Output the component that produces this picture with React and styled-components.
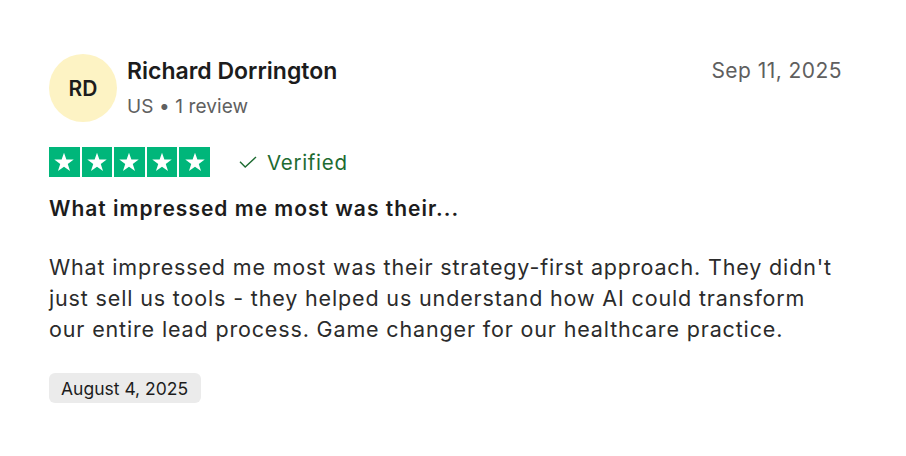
import React from 'react'
import styled, { createGlobalStyle } from 'styled-components'

const GlobalStyle = createGlobalStyle`
  body {
    margin: 0;
    background: #ffffff;
    font-family: Inter, "Noto Sans", sans-serif;
    color: #1c1c1c;
  }
`

const Card = styled.article`
  width: 906px;
  height: 456px;
  box-sizing: border-box;
  padding: 54px 64px 0 49px;
  display: flex;
  flex-direction: column;
`

const Header = styled.header`
  display: flex;
  align-items: flex-start;
`

const Avatar = styled.div`
  width: 68px;
  height: 68px;
  border-radius: 50%;
  background: #fdf3c4;
  display: flex;
  align-items: center;
  justify-content: center;
  font-size: 21px;
  font-weight: 600;
  color: #1c1c1c;
  flex-shrink: 0;
`

const Who = styled.div`
  margin-left: 10px;
  flex: 1;
  display: flex;
  flex-direction: column;
  padding-top: 3px;
`

const Name = styled.div`
  font-size: 23px;
  font-weight: 600;
  line-height: 28px;
  color: #1c1c1c;
`

const Meta = styled.div`
  margin-top: 10px;
  font-size: 19px;
  line-height: 23px;
  letter-spacing: 0.1px;
  color: #606060;
`

const Posted = styled.time`
  font-size: 21px;
  line-height: 26px;
  letter-spacing: 0.45px;
  color: #5f5f5f;
  padding-top: 4px;
`

const RatingRow = styled.div`
  display: flex;
  align-items: center;
  margin-top: 25px;
`

const Stars = styled.div`
  display: flex;
  gap: 2px;
`

const StarBox = styled.span`
  width: 30.6px;
  height: 30px;
  background: #00b67a;
  display: flex;
  align-items: center;
  justify-content: center;
`

const Verified = styled.span`
  margin-left: 29px;
  display: flex;
  align-items: center;
  gap: 10px;
  font-size: 20.5px;
  letter-spacing: 0.7px;
  color: #1d6b31;
`

const Title = styled.h2`
  margin: 19px 0 0;
  font-size: 21px;
  font-weight: 600;
  line-height: 26px;
  letter-spacing: 1px;
  color: #1c1c1c;
`

const Body = styled.p`
  margin: 30px 0 0;
  font-size: 21.5px;
  line-height: 31px;
  letter-spacing: 0.85px;
  color: #2b2b2b;
  white-space: nowrap;
`

const DatePill = styled.span`
  align-self: flex-start;
  margin-top: 28px;
  background: #ebebeb;
  border-radius: 6px;
  padding: 0 13px 0 12px;
  height: 30px;
  display: flex;
  align-items: center;
  font-size: 17.5px;
  color: #1c1c1c;
`

const Star = () => (
  <svg width="22" height="22" viewBox="0 0 24 24">
    <path
      fill="#ffffff"
      d="M12 1.8l2.6 7.6h8l-6.5 4.7 2.5 7.7L12 17.1l-6.6 4.7 2.5-7.7L1.4 9.4h8z"
    />
  </svg>
)

const Check = () => (
  <svg width="18" height="12" viewBox="0 0 18 12">
    <path d="M1 5.8l5.2 5.2L17 1" fill="none" stroke="#1d6b31" strokeWidth="1.4" />
  </svg>
)

export default function App() {
  return (
    <>
      <GlobalStyle />
      <Card>
        <Header>
          <Avatar>RD</Avatar>
          <Who>
            <Name>Richard Dorrington</Name>
            <Meta>US • 1 review</Meta>
          </Who>
          <Posted>Sep 11, 2025</Posted>
        </Header>

        <RatingRow>
          <Stars>
            {[0, 1, 2, 3, 4].map(i => (
              <StarBox key={i}>
                <Star />
              </StarBox>
            ))}
          </Stars>
          <Verified>
            <Check />
            Verified
          </Verified>
        </RatingRow>

        <Title>What impressed me most was their...</Title>
        <Body>
          What impressed me most was their strategy-first approach. They didn't
          <br />
          just sell us tools - they helped us understand how AI could transform
          <br />
          our entire lead process. Game changer for our healthcare practice.
        </Body>

        <DatePill>August 4, 2025</DatePill>
      </Card>
    </>
  )
}
